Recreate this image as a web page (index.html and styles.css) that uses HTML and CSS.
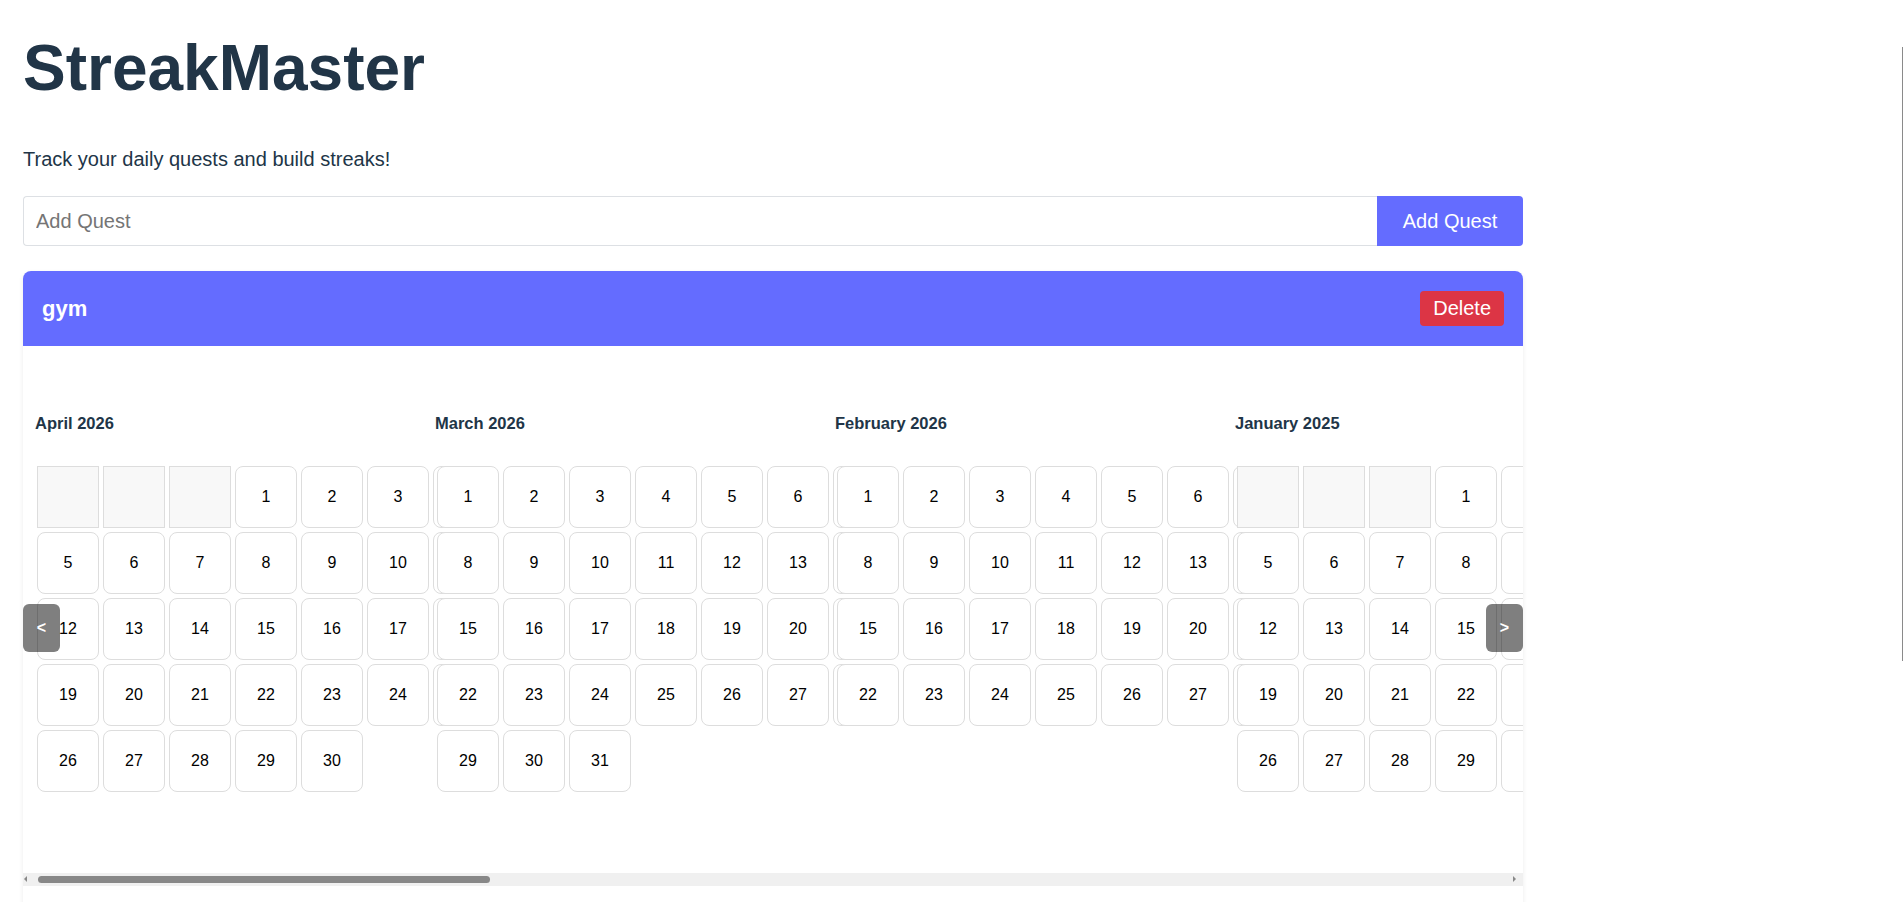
FILE: index.html
```html
<!DOCTYPE html>
<html lang="en">
<head>
<meta charset="utf-8">
<title>StreakMaster</title>
<link rel="stylesheet" href="styles.css">
</head>
<body>
<div class="app">
  <h1 class="title">StreakMaster</h1>
  <p class="subtitle">Track your daily quests and build streaks!</p>
  <form class="add-form">
    <input class="add-input" type="text" placeholder="Add Quest">
    <button class="add-btn" type="button">Add Quest</button>
  </form>
  <div class="quest-card">
    <div class="quest-header">
      <h2 class="quest-name">gym</h2>
      <button class="delete-btn" type="button">Delete</button>
    </div>
    <div class="quest-body">
      <button class="nav-btn nav-prev" type="button">&lt;</button>
      <div class="months"></div>
      <div class="hscroll" aria-hidden="true">
        <span class="hscroll-arrow hscroll-left"></span>
        <span class="hscroll-thumb"></span>
        <span class="hscroll-rest"></span>
        <span class="hscroll-arrow hscroll-right"></span>
      </div>
      <button class="nav-btn nav-next" type="button">&gt;</button>
    </div>
  </div>
</div>
<div class="page-scrollbar"></div>
<script src="script.js"></script>
</body>
</html>
```

FILE: styles.css
```css
* {
  box-sizing: border-box;
}

html {
  scrollbar-width: none;
}

body {
  margin: 0;
  font-family: "Liberation Sans", Arial, sans-serif;
  color: #213547;
  background: #ffffff;
}

.app {
  width: 1500px;
  margin-left: 23px;
}

.title {
  margin: 32px 0 0;
  font-size: 64px;
  line-height: 72px;
  font-weight: 700;
  color: #213547;
}

.subtitle {
  margin: 44px 0 0;
  font-size: 20px;
  line-height: 23px;
}

.add-form {
  display: flex;
  height: 50px;
  margin-top: 25px;
}

.add-input {
  flex: 1;
  min-width: 0;
  padding: 0 12px;
  border: 1px solid #dde0e4;
  border-right: none;
  border-radius: 4px 0 0 4px;
  font: 20px "Liberation Sans", Arial, sans-serif;
  color: #213547;
  outline: none;
}

.add-input::placeholder {
  color: #757575;
}

.add-btn {
  width: 146px;
  padding: 0;
  border: none;
  border-radius: 0 4px 4px 0;
  background: #646cff;
  color: #ffffff;
  font: 20px "Liberation Sans", Arial, sans-serif;
}

.quest-card {
  margin-top: 25px;
  border-radius: 8px;
  overflow: hidden;
  background: #ffffff;
  box-shadow: 0 2px 5px rgba(0, 0, 0, 0.08);
}

.quest-header {
  display: flex;
  align-items: center;
  justify-content: space-between;
  padding: 20px 19px;
  background: #646cff;
  color: #ffffff;
}

.quest-name {
  margin: 0;
  font-size: 22px;
  line-height: 26px;
  font-weight: 700;
}

.delete-btn {
  height: 35px;
  padding: 0 13px;
  border: none;
  border-radius: 4px;
  background: #dc3545;
  color: #ffffff;
  font: 20px/23px "Liberation Sans", Arial, sans-serif;
}

.quest-body {
  position: relative;
  padding-bottom: 24px;
}

.months {
  display: flex;
  overflow-x: auto;
  overflow-y: hidden;
  padding: 12px 12px 13px;
  scrollbar-width: none;
}

.month {
  flex: 0 0 400px;
  min-width: 0;
}

.month-title {
  margin: 56px 0 31px;
  font-size: 16.5px;
  line-height: 19px;
  font-weight: 700;
  color: #213547;
}

.days {
  display: grid;
  grid-template-columns: repeat(7, 62px);
  grid-auto-rows: 62px;
  gap: 4px;
  width: max-content;
  padding: 2px;
}

.day {
  display: flex;
  align-items: center;
  justify-content: center;
  border: 1px solid #dddddd;
  border-radius: 8px;
  background: #ffffff;
  font-size: 16px;
  color: #000000;
}

.day.empty {
  border-radius: 0;
  background: #f8f8f8;
}

.hscroll {
  display: flex;
  align-items: center;
  height: 13px;
  background: #f0f0f0;
}

.hscroll-arrow {
  position: relative;
  flex: 0 0 15px;
  height: 13px;
}

.hscroll-left::before,
.hscroll-right::before {
  content: "";
  position: absolute;
  top: 3px;
  width: 0;
  height: 0;
  border-top: 3px solid transparent;
  border-bottom: 3px solid transparent;
}

.hscroll-left::before {
  left: 1px;
  border-right: 3px solid #888888;
}

.hscroll-right::before {
  left: 5px;
  border-left: 3px solid #888888;
}

.hscroll-thumb {
  flex: 0 0 452px;
  height: 7px;
  border-radius: 4px;
  background: #888888;
}

.hscroll-rest {
  flex: 1;
}

.nav-btn {
  position: absolute;
  top: 50%;
  z-index: 2;
  width: 37px;
  height: 48px;
  padding: 0;
  border: none;
  border-radius: 6px;
  background: rgba(0, 0, 0, 0.5);
  color: #ffffff;
  font: 700 16px "Liberation Sans", Arial, sans-serif;
  transform: translateY(-50%);
}

.nav-prev {
  left: 0;
}

.nav-next {
  right: 0;
}

.page-scrollbar {
  position: fixed;
  top: 47px;
  right: 1px;
  width: 1px;
  height: 614px;
  background: #8a8a8a;
}
```

FILE: script.js
```js
const months = [
  ["April 2026", 2026, 3],
  ["March 2026", 2026, 2],
  ["February 2026", 2026, 1],
  ["January 2025", 2025, 0],
  ["December 2025", 2025, 11],
  ["November 2025", 2025, 10],
  ["October 2025", 2025, 9],
  ["September 2025", 2025, 8],
  ["August 2025", 2025, 7],
  ["July 2025", 2025, 6],
  ["June 2025", 2025, 5],
  ["May 2025", 2025, 4]
];

const container = document.querySelector(".months");

months.forEach(([label, year, monthIndex]) => {
  const month = document.createElement("div");
  month.className = "month";

  const title = document.createElement("h3");
  title.className = "month-title";
  title.textContent = label;

  const grid = document.createElement("div");
  grid.className = "days";

  const firstDay = new Date(year, monthIndex, 1).getDay();
  const dayCount = new Date(year, monthIndex + 1, 0).getDate();

  for (let i = 0; i < firstDay; i++) {
    const cell = document.createElement("div");
    cell.className = "day empty";
    grid.appendChild(cell);
  }
  for (let d = 1; d <= dayCount; d++) {
    const cell = document.createElement("div");
    cell.className = "day";
    cell.textContent = d;
    grid.appendChild(cell);
  }

  month.append(title, grid);
  container.appendChild(month);
});
```
